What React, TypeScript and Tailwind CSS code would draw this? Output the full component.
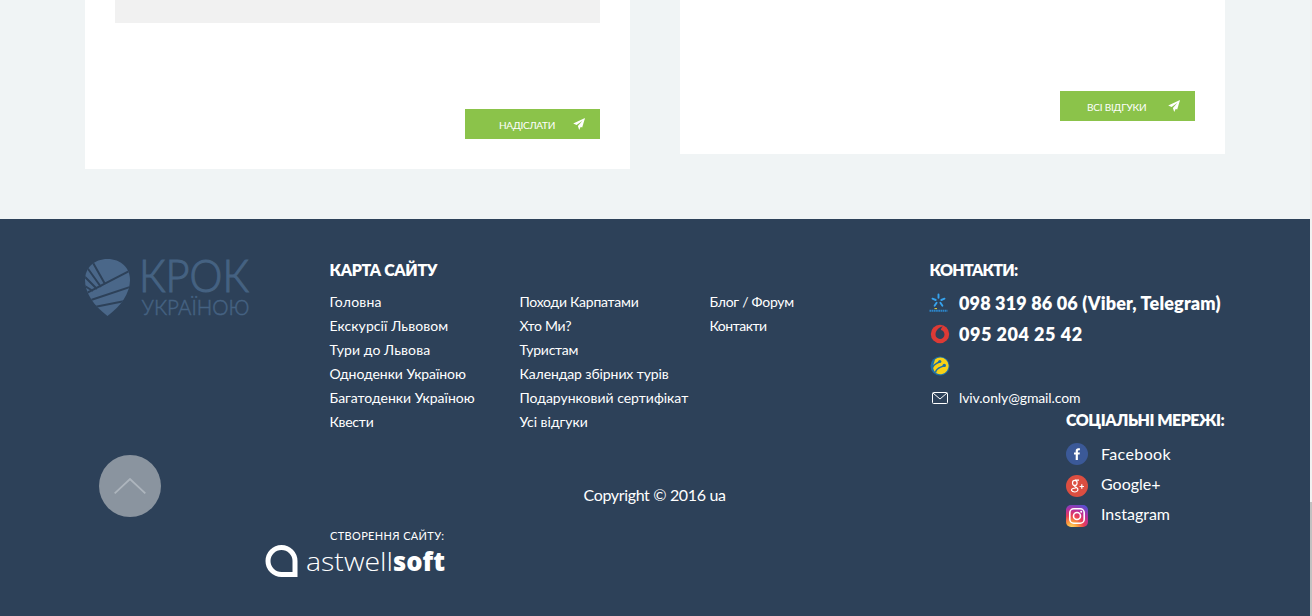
import type { ReactNode } from "react";

function Plane() {
  return (
    <svg viewBox="0 0 12 12" className="size-3 overflow-visible" fill="#fff">
      <path d="M12 0 .2 5.500l3.400 1.600L9.500 2.700 4.900 7.900 6.200 12z" />
      <path d="M12 0 6.200 8.200 9.200 9.400z" />
    </svg>
  );
}

function MapColumn({ items }: { items: [string, string][] }) {
  return (
    <ul className="w-[190px] whitespace-nowrap text-sm leading-6">
      {items.map(([label, tracking]) => (
        <li key={label} className={tracking}>{label}</li>
      ))}
    </ul>
  );
}

function Row({ icon, children, className }: { icon: ReactNode; children?: ReactNode; className: string }) {
  return (
    <div className={`flex items-center whitespace-nowrap ${className}`}>
      {icon}
      {children}
    </div>
  );
}

function Kyivstar() {
  return (
    <svg viewBox="0 0 20 20" className="mb-[2px] size-5" fill="none">
      <g stroke="#36a3ee" strokeWidth="1.900" strokeLinecap="round">
        <path d="M9.500 1.500v3.300M3.500 5.700l3.200 1.300M15.500 5.700l-3.200 1.300M7.600 9.800l-2 3M11.400 9.800l2 3" />
      </g>
      <path d="M.5 17.800h18" stroke="#2c86cb" strokeWidth="2" strokeDasharray="1.700 .5" />
      <path d="M5.500 15.600h2.500" stroke="#e8cf3a" />
    </svg>
  );
}

function Vodafone() {
  return (
    <svg viewBox="0 0 20 20" className="mb-[2px] size-5">
      <circle cx="10" cy="10" r="9.200" fill="#dd3a35" />
      <path d="M12.800 2.400C9.500 2.800 5.500 6.200 5.500 10.400a4.500 4.500 0 0 0 9 .2c0-2.500-1.400-4.100-3.600-4.600.1-1.500.8-2.700 1.900-3.600z" fill="#2d4159" />
    </svg>
  );
}

function Lifecell() {
  return (
    <svg viewBox="0 0 20 20" className="size-5">
      <circle cx="10" cy="10" r="9.500" fill="#1d6fa5" />
      <path d="M5 3.500A8.300 8.300 0 1 1 6.500 17.300C3.500 15 2.500 12 3.500 8.500z" fill="#f7d117" />
      <path d="M2.500 11.500C4 8 6.500 8 9.500 5.600M5.500 16.500C6.500 11.500 10 12 14 9.600" fill="none" stroke="#1d6fa5" strokeWidth="1.500" />
      <circle cx="9.800" cy="5.500" r="1.600" fill="#1d6fa5" />
      <circle cx="14.300" cy="9.400" r="1.700" fill="#1d6fa5" />
    </svg>
  );
}

export default function App() {
  return (
    <div className="flex h-[616px] w-[1312px] overflow-hidden bg-[#f0f4f5] font-['Lato',sans-serif] text-white">
      <div className="flex w-[1310px] flex-col">
        <div className="flex h-[219px] items-start gap-[50px] pl-[85px]">
          <section className="flex h-[169px] w-[545px] flex-col bg-white px-[30px]">
            <div className="h-[23px] w-[485px] bg-[#f1f1f1]" />
            <button className="mt-[86px] flex h-[30px] w-[135px] items-center self-end bg-[#8bc34a] pl-[34px] text-[10px]">
              <span className="w-[74px] pt-[3px] text-left tracking-[-0.3px]">НАДІСЛАТИ</span>
              <Plane />
            </button>
          </section>
          <section className="flex h-[154px] w-[545px] flex-col bg-white px-[30px]">
            <button className="mt-[91px] flex h-[30px] w-[135px] items-center self-end bg-[#8bc34a] pl-[27px] text-[10px]">
              <span className="w-[81px] pt-[3px] text-left tracking-[-0.2px]">ВСІ ВІДГУКИ</span>
              <Plane />
            </button>
          </section>
        </div>

        <footer className="flex h-[397px] bg-[#2d4159]">
          <div className="flex w-[329px] shrink-0 flex-col pl-[85px] pt-[38px]">
            <svg viewBox="0 0 166 60" className="h-[60px] w-[166px] overflow-visible">
              <defs>
                <clipPath id="drop">
                  <path d="M22.500 2C9 2 0 11 0 23c0 13 9 26 22.500 36C36 49 45 36 45 23 45 11 36 2 22.500 2z" />
                </clipPath>
              </defs>
              <g clipPath="url(#drop)">
                <path fill="#4a6789" d="M0 0h50v60H0z" />
                <path d="M7 4 20 27M1 9l15 21M-2 18l14 14M-2 28l10 6M-2 38 48 12M3 44l45-15M7 50.500 45 43" stroke="#2d4159" strokeWidth="2" />
              </g>
              <g fill="#456282" stroke="#456282" fontFamily="Lato" fontWeight="300">
                <text x="54" y="35" fontSize="46" strokeWidth="1.100" textLength="110" lengthAdjust="spacingAndGlyphs">КРОК</text>
                <text x="56.500" y="57.500" fontSize="22" strokeWidth=".5" textLength="108" lengthAdjust="spacingAndGlyphs">УКРАЇНОЮ</text>
              </g>
            </svg>
            <button className="ml-[14px] mt-[138px] flex size-[62px] items-center justify-center rounded-full bg-[#8a949f]">
              <svg viewBox="0 0 32 16" className="h-4 w-8" fill="none" stroke="#adb5bd" strokeWidth="1.800">
                <path d="M.7 15.300 16 1l15.300 14.300" />
              </svg>
            </button>
          </div>

          <div className="flex w-[600px] shrink-0 flex-col pt-[39px]">
            <h3 className="h-6 pl-[0.5px] text-[16px] font-extrabold leading-6 tracking-[-0.33px]">КАРТА САЙТУ</h3>
            <div className="mt-[8px] flex h-[144px] pl-[0.5px]">
              <MapColumn
                items={[
                  ["Головна", "tracking-[0.2px]"],
                  ["Екскурсії Львовом", "tracking-[0.08px]"],
                  ["Тури до Львова", "tracking-[0.1px]"],
                  ["Одноденки Україною", "tracking-[-0.06px]"],
                  ["Багатоденки Україною", "tracking-normal"],
                  ["Квести", "tracking-[-0.25px]"],
                ]}
              />
              <MapColumn
                items={[
                  ["Походи Карпатами", "tracking-[-0.25px]"],
                  ["Хто Ми?", "tracking-[-0.3px]"],
                  ["Туристам", "tracking-[-0.25px]"],
                  ["Календар збірних турів", "tracking-[-0.1px]"],
                  ["Подарунковий сертифікат", "tracking-normal"],
                  ["Усі відгуки", "tracking-normal"],
                ]}
              />
              <MapColumn
                items={[
                  ["Блог / Форум", "tracking-[-0.26px]"],
                  ["Контакти", "tracking-[-0.5px]"],
                ]}
              />
            </div>
            <p className="ml-[254.500px] mt-[49px] h-6 text-[16px] leading-6 tracking-[-0.35px]">Copyright © 2016 ua</p>
            <div className="-ml-[64px] mt-[21px] w-[182px]">
              <p className="pl-[65px] text-[11px] leading-4 tracking-[0.35px]">СТВОРЕННЯ САЙТУ:</p>
              <svg viewBox="0 0 182 34" className="h-[34px] w-[182px]">
                <path d="M16.500 3.500A13.500 13.500 0 1 0 16.500 30.500H30V17A13.500 13.500 0 0 0 16.500 3.500z" fill="none" stroke="#fff" strokeWidth="5" />
                <text x="41" y="27" fill="#fff" fontFamily="Open Sans" fontSize="26" fontWeight="300" textLength="87" lengthAdjust="spacingAndGlyphs">astwell</text>
                <text x="128" y="27" fill="#fff" fontFamily="Open Sans" fontSize="26" fontWeight="800" textLength="52" lengthAdjust="spacingAndGlyphs">soft</text>
              </svg>
            </div>
          </div>

          <div className="flex w-[300px] shrink-0 flex-col pt-[39px]">
            <h3 className="h-6 pl-[0.5px] text-[16px] font-extrabold leading-6 tracking-[-0.7px]">КОНТАКТИ:</h3>
            <Row className="mt-[6px] h-[31px] gap-[10px] text-[18px] font-extrabold tracking-[0.16px]" icon={<Kyivstar />}>
              098 319 86 06 (Viber, Telegram)
            </Row>
            <Row className="h-[31px] gap-[10px] pl-px text-[18px] font-extrabold tracking-[0.52px]" icon={<Vodafone />}>
              <span className="-ml-px">095 204 25 42</span>
            </Row>
            <Row className="h-[32px] pl-px" icon={<Lifecell />} />
            <Row
              className="h-[32px] gap-3 pl-[3px] text-sm tracking-[-0.12px]"
              icon={
                <svg viewBox="0 0 16 12" className="h-3 w-4" fill="none" stroke="#fff">
                  <rect x=".5" y=".5" width="15" height="11" rx="1" />
                  <path d="m1 1 7 6 7-6" />
                </svg>
              }
            >
              <span className="-ml-px">lviv.only@gmail.com</span>
            </Row>
            <div className="-mt-[6px] pl-[137px]">
              <h3 className="h-6 whitespace-nowrap text-[16px] font-extrabold leading-6 tracking-[-0.5px]">СОЦІАЛЬНІ МЕРЕЖІ:</h3>
              <Row
                className="mt-[7px] h-[30px] gap-[13px] text-[16px] tracking-[0.38px]"
                icon={
                  <svg viewBox="0 0 22 22" className="size-[22px]">
                    <circle cx="11" cy="11" r="11" fill="#3b5998" />
                    <path d="M9.700 17v-5.400H8V9.500h1.700V8c0-1.700 1-2.700 2.700-2.700h1.500v2h-1c-.7 0-1 .3-1 .9v1.300h2l-.3 2.100h-1.700V17z" fill="#fff" />
                  </svg>
                }
              >
                Facebook
              </Row>
              <Row
                className="h-[30px] gap-[13px] text-[16px]"
                icon={
                  <svg viewBox="0 0 22 22" className="mt-[3px] size-[22px]">
                    <circle cx="11" cy="11" r="11" fill="#dc4e41" />
                    <g fill="none" stroke="#fff" strokeWidth="1.200">
                      <ellipse cx="8.800" cy="7.900" rx="2.300" ry="2.500" />
                      <path d="M9 5.200h4M9.300 10.400c-1.600 1 .2 1.600 1.500 2.400 2.300 1.600.8 4.200-2 4.200-3.600 0-4.200-2.600-2-3.500 1-.5 2-.5 3-.5M15.800 9.300v4.400M13.600 11.500H18" />
                    </g>
                  </svg>
                }
              >
                Google+
              </Row>
              <Row
                className="h-[30px] gap-[13px] text-[16px]"
                icon={
                  <svg viewBox="0 0 22 22" className="mt-[3px] size-[22px]" fill="none">
                    <defs>
                      <radialGradient id="ig" cx=".25" cy="1.050" r="1.150">
                        <stop stopColor="#ffe06a" />
                        <stop offset=".25" stopColor="#fb9a3c" />
                        <stop offset=".5" stopColor="#ea3c55" />
                        <stop offset=".75" stopColor="#b52fa0" />
                        <stop offset="1" stopColor="#5b4fd0" />
                      </radialGradient>
                    </defs>
                    <rect width="22" height="22" rx="5" fill="url(#ig)" />
                    <g stroke="#fff" strokeWidth="1.600">
                      <rect x="3.800" y="3.800" width="14.400" height="14.400" rx="4" />
                      <circle cx="11" cy="11" r="3.500" />
                    </g>
                    <circle cx="15.200" cy="6.800" r="1" fill="#fff" />
                  </svg>
                }
              >
                Instagram
              </Row>
            </div>
          </div>
        </footer>
      </div>
      <div className="w-[2px] bg-[#f1f1f1] pt-[502px]">
        <div className="h-[114px] bg-[#c1c1c1]" />
      </div>
    </div>
  );
}
